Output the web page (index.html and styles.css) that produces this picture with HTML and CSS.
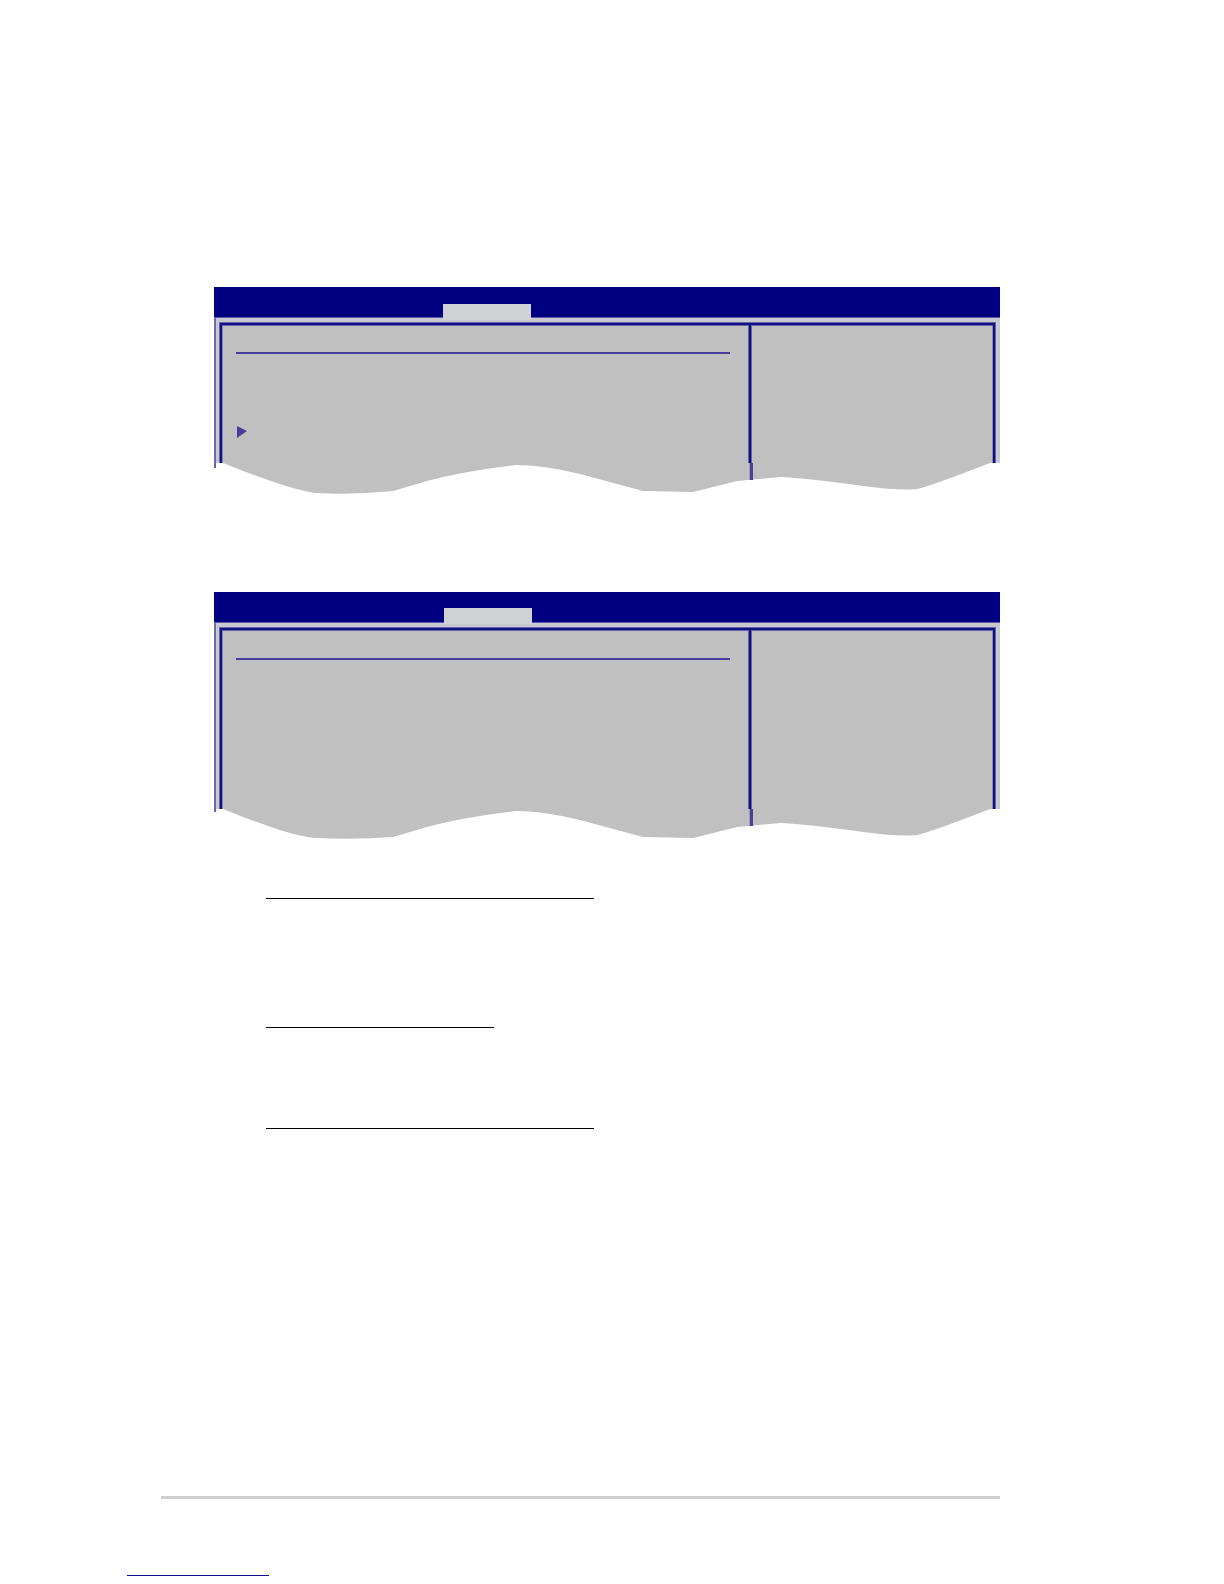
FILE: index.html
```html
<!DOCTYPE html>
<html lang="en">
<head>
    <meta charset="UTF-8">
    <meta name="viewport" content="width=device-width, initial-scale=1.0">
    <title>Setup Screens</title>
    <link rel="stylesheet" href="styles.css">
</head>
<body>

<main>
    <!-- First screen -->
    <section class="screen">
        <div class="menu-bar">
            <button type="button" class="tab" aria-label="Current menu"></button>
        </div>
        <div class="screen-body">
            <div class="frame">
                <div class="items">
                    <hr class="title-line">
                    <svg class="arrow" viewBox="0 0 10 12" aria-hidden="true">
                        <path d="M0 0 L10 5 L0 12 Z" fill="#483d9c"/>
                    </svg>
                </div>
                <div class="help"></div>
            </div>
        </div>
        <svg class="torn-edge" viewBox="0 0 786 31" preserveAspectRatio="none" aria-hidden="true">
            <path d="M9 0 L29 8 L54 17 Q82 27 101 30 Q140 32 179 28 L213 18 Q250 8 302 2 Q328 2 366 11 L429 28 L479 29 L523 18 L566 14 Q592 15 649 23 Q687 28 703 26 Q717 23 776 0 Z" fill="#c0c0c0"/>
            <path d="M0 0 H2 V5 H0 Z" fill="#6a60a8"/>
            <path d="M535 0 H536 V17 H535 Z" fill="#9c98b8"/>
            <path d="M536 0 H539 V17 H536 Z" fill="#4a409c"/>
        </svg>
    </section>

    <!-- Second screen -->
    <section class="screen screen-tall">
        <div class="menu-bar">
            <button type="button" class="tab" aria-label="Current menu"></button>
        </div>
        <div class="screen-body">
            <div class="frame">
                <div class="items">
                    <hr class="title-line">
                </div>
                <div class="help"></div>
            </div>
        </div>
        <svg class="torn-edge" viewBox="0 0 786 31" preserveAspectRatio="none" aria-hidden="true">
            <path d="M9 0 L29 8 L54 17 Q82 27 101 29 Q140 31 179 28 L213 18 Q250 8 302 2 Q328 2 366 11 L429 28 L479 29 L523 18 L566 14 Q592 15 649 23 Q687 28 703 26 Q717 23 776 0 Z" fill="#c0c0c0"/>
            <path d="M0 0 H2 V3 H0 Z" fill="#6a60a8"/>
            <path d="M535 0 H536 V17 H535 Z" fill="#9c98b8"/>
            <path d="M536 0 H539 V17 H536 Z" fill="#4a409c"/>
        </svg>
    </section>

    <!-- Heading rules -->
    <div class="topics">
        <hr class="rule rule-first">
        <hr class="rule rule-short">
        <hr class="rule rule-last">
    </div>
</main>

<footer>
    <hr class="footer-line">
    <a href="#" class="footer-link" aria-label="Back to top"></a>
</footer>

</body>
</html>
```

FILE: styles.css
```css
* {
    margin: 0;
    padding: 0;
    box-sizing: border-box;
}
body {
    font-family: "Liberation Sans", Arial, sans-serif;
    background-color: #fff;
    padding-bottom: 8px;
}
hr {
    border: none;
}
main {
    padding: 287px 224px 0 214px;
}
.screen {
    margin-bottom: 98px;
}
.screen-tall {
    margin-bottom: 58px;
}
.menu-bar {
    height: 30px;
    padding: 17px 0 0 229px;
    background-color: #000080;
}
.tab {
    display: block;
    position: relative;
    width: 88px;
    height: 16px;
    border: none;
    background-color: #d0d3d5;
}
.screen-tall .menu-bar {
    padding: 16px 0 0 230px;
}
.screen-body {
    padding: 5px 5px 0 4px;
    border-top: 1px solid #6058a8;
    border-left: 2px solid #7068ac;
    background-color: #c8c8d0;
    overflow: hidden;
}
.frame {
    display: grid;
    grid-template-columns: 1fr 244px;
    min-height: 140px;
    border: 2px solid #101080;
    border-bottom: none;
    background-color: #c0c0c0;
    box-shadow: 0 0 0 1px #6464a8, inset 0 1px 0 #6464a8, inset 1px 0 0 #8888b4, inset -1px 0 0 #8888b4;
}
.screen-tall .frame {
    min-height: 181px;
}
.items {
    padding: 27px 19px 0 14px;
}
.screen-tall .items {
    padding-top: 28px;
}
.help {
    border-left: 2px solid #101080;
    box-shadow: -1px 0 0 #6464a8, inset 1px 0 0 #6464a8;
}
.title-line {
    height: 2px;
    background-color: #483d9c;
}
.arrow {
    display: block;
    width: 10px;
    height: 12px;
    margin: 72px 0 0 1px;
}
.torn-edge {
    display: block;
    width: 100%;
    height: 31px;
}
.topics {
    padding-left: 52px;
}
.rule {
    height: 1px;
    max-width: 328px;
    background-color: #000;
}
.rule-first {
    margin-bottom: 128px;
}
.rule-short {
    max-width: 228px;
    margin-bottom: 100px;
}
.rule-last {
    margin-bottom: 367px;
}
footer {
    padding: 0 224px 0 127px;
}
.footer-line {
    height: 3px;
    margin: 0 0 76px 34px;
    background-color: #d0d0d0;
}
.footer-link {
    display: block;
    width: 142px;
    border-bottom: 1px solid #10108c;
}
```
